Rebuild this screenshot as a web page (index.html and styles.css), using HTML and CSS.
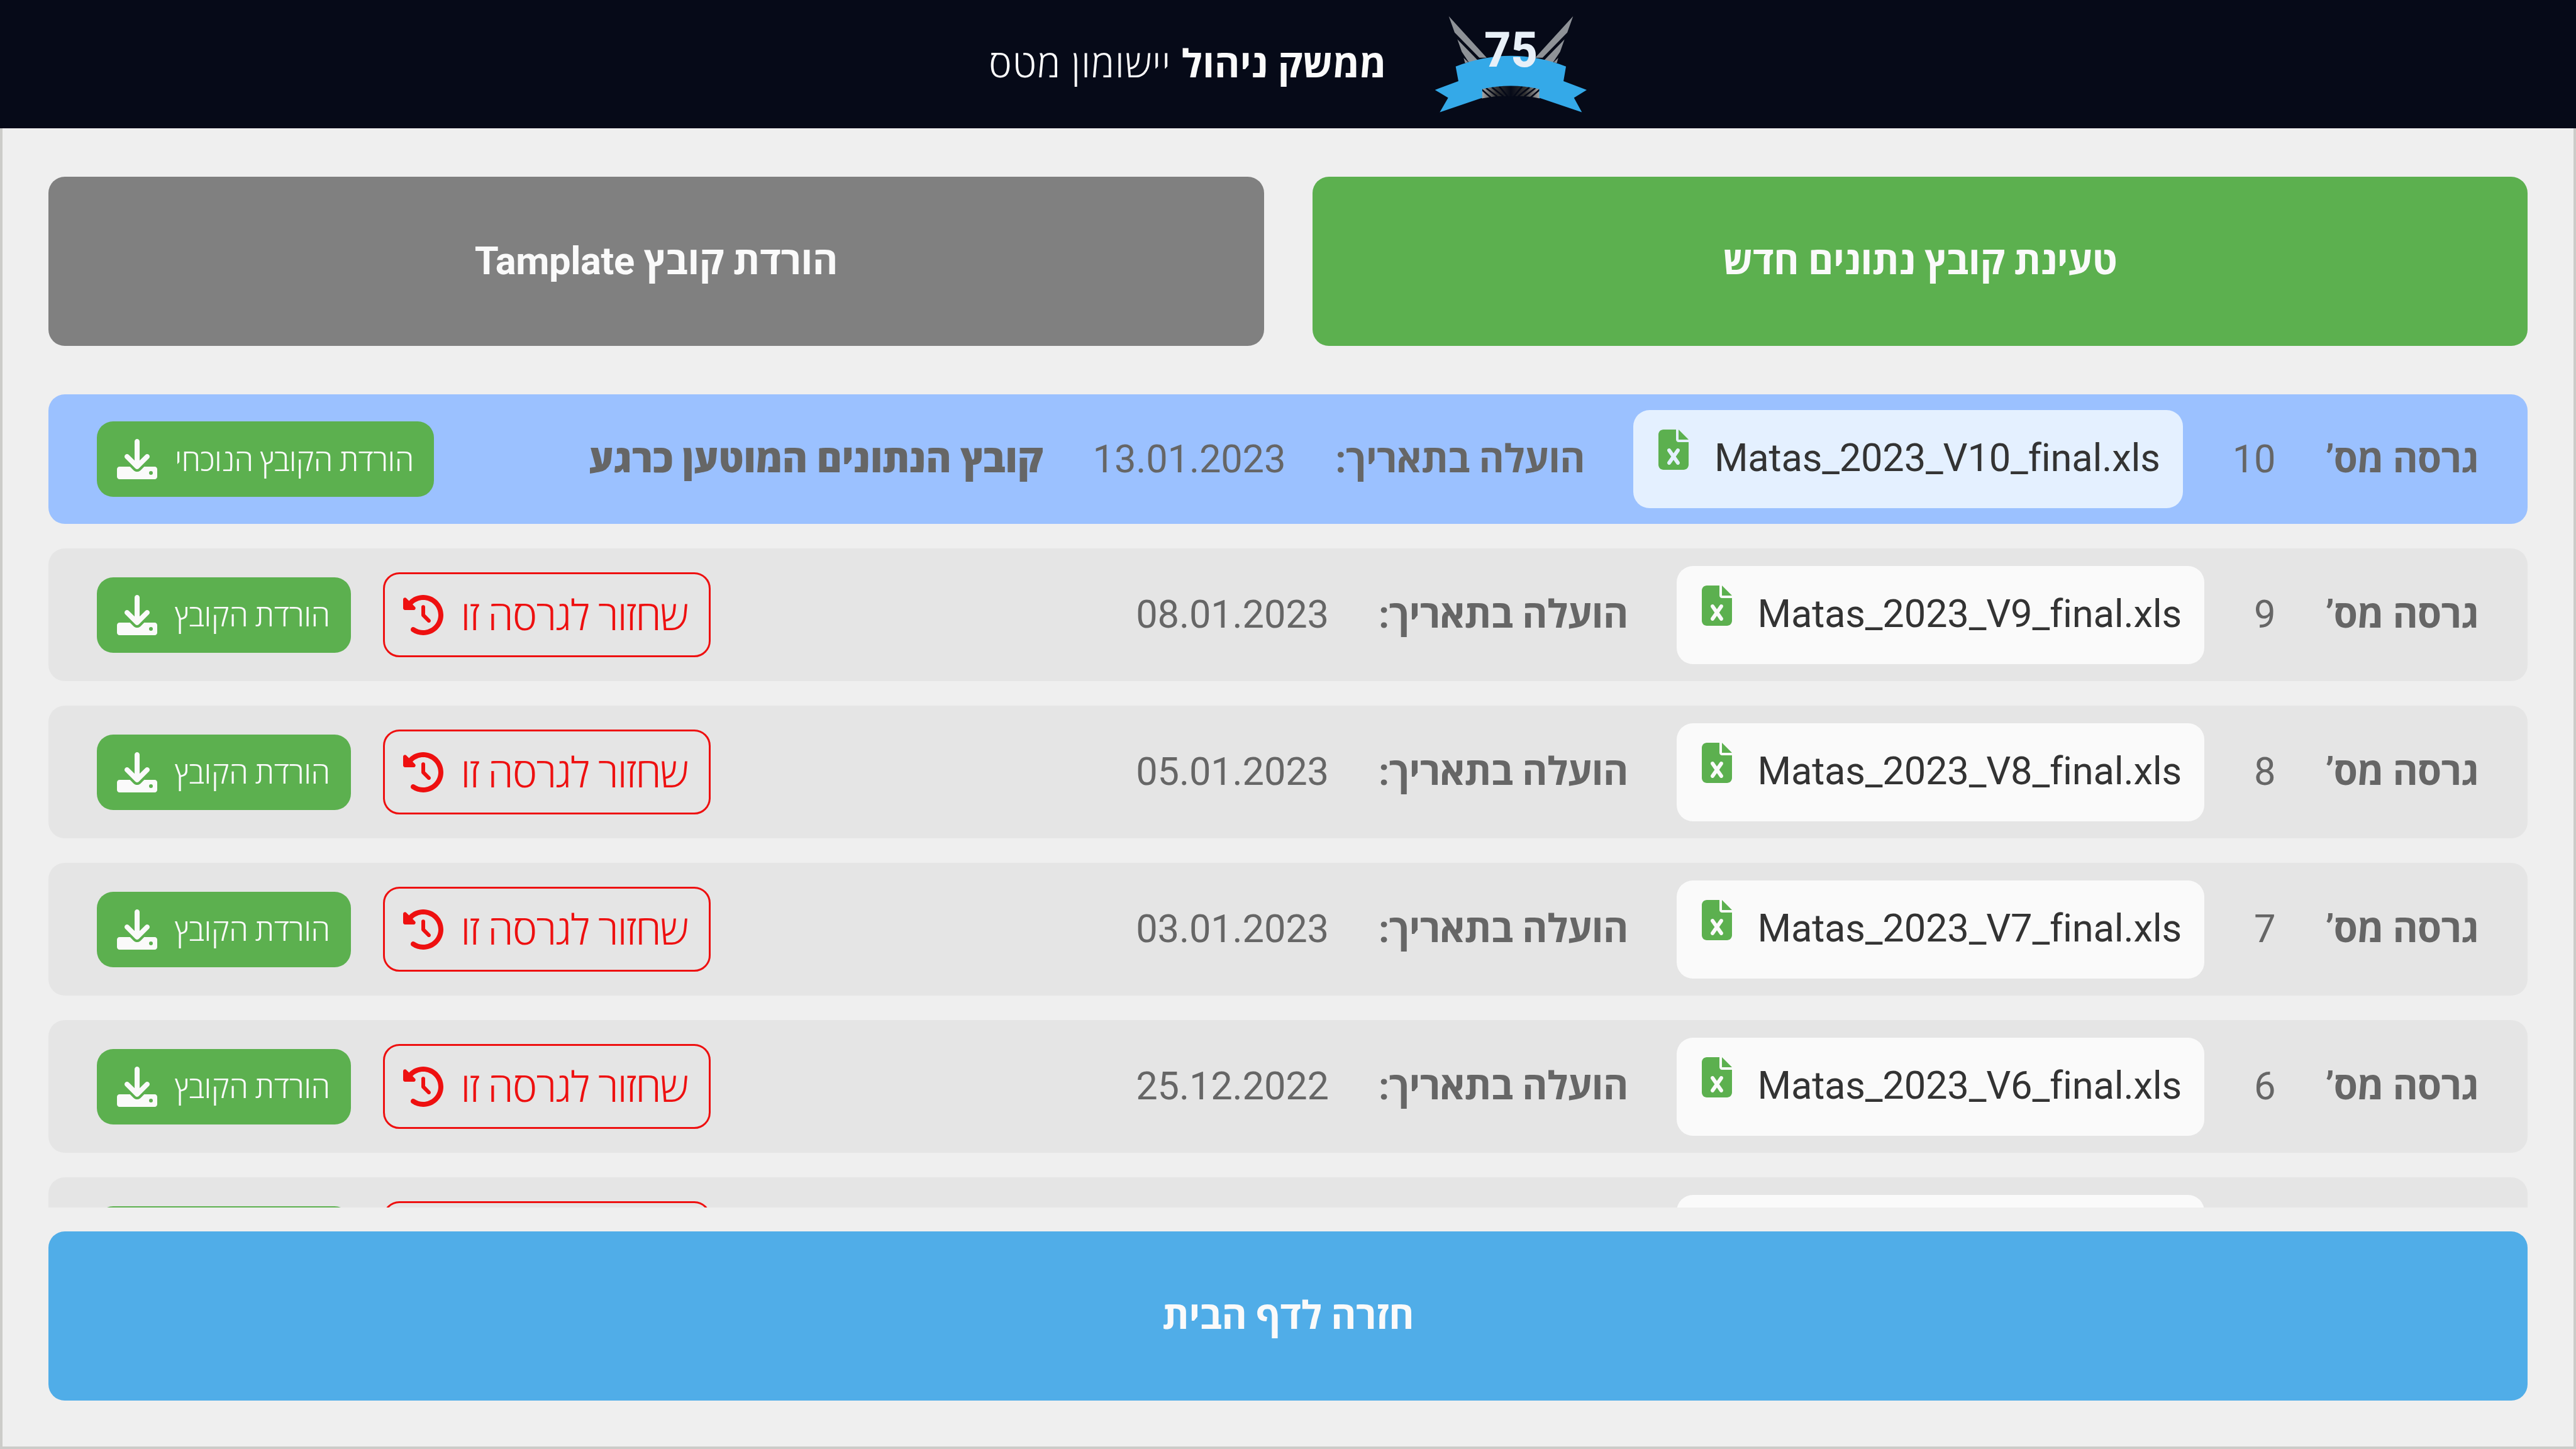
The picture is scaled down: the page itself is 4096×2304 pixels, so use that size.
FILE: index.html
```html
<!DOCTYPE html>
<html lang="he" dir="rtl">
  <head>
    <meta charset="UTF-8" />
    <title>ממשק ניהול יישומון מטס</title>
    <link rel="stylesheet" href="styles.css">
  </head>
  <body>
    <!-- Icons -->
    <svg class="sprite">
      <symbol id="icon-excel" viewBox="0 0 384 512">
        <path d="M64 0C28.7 0 0 28.7 0 64V448c0 35.3 28.7 64 64 64H320c35.3 0 64-28.7 64-64V160H256c-17.7 0-32-14.3-32-32V0H64zM256 0V128H384L256 0zM155.7 250.2L192 302.1l36.3-51.9c7.6-10.9 22.6-13.5 33.4-5.9s13.5 22.6 5.9 33.4L221.3 344l46.4 66.2c7.6 10.9 5 25.8-5.9 33.4s-25.8 5-33.4-5.9L192 385.8l-36.3 51.9c-7.6 10.9-22.6 13.5-33.4 5.9s-13.5-22.6-5.9-33.4L162.7 344l-46.4-66.2c-7.6-10.9-5-25.8 5.9-33.4s25.8-5 33.4 5.9z" />
      </symbol>
      <symbol id="icon-restore" viewBox="0 0 512 512">
        <path d="M75 75L41 41C25.9 25.9 0 36.6 0 57.9V168c0 13.3 10.7 24 24 24H134.1c21.4 0 32.1-25.9 17-41l-30.8-30.8C155 85.5 203 64 256 64c106 0 192 86 192 192s-86 192-192 192c-40.8 0-78.6-12.7-109.7-34.4c-14.5-10.1-34.4-6.6-44.6 7.9s-6.6 34.4 7.9 44.6C151.2 495 201.7 512 256 512c141.4 0 256-114.6 256-256S397.4 0 256 0C185.3 0 121.3 28.7 75 75zm181 53c-13.3 0-24 10.7-24 24V256c0 6.4 2.5 12.5 7 17l72 72c9.4 9.4 24.6 9.4 33.9 0s9.4-24.6 0-33.9l-65-65V152c0-13.3-10.7-24-24-24z" />
      </symbol>
      <symbol id="icon-download" viewBox="0 0 512 512">
        <path d="M288 32c0-17.7-14.3-32-32-32s-32 14.3-32 32V274.7l-73.4-73.4c-12.5-12.5-32.8-12.5-45.3 0s-12.5 32.8 0 45.3l128 128c12.5 12.5 32.8 12.5 45.3 0l128-128c12.5-12.5 12.5-32.8 0-45.3s-32.8-12.5-45.3 0L288 274.7V32zM32 352c-17.7 0-32 14.3-32 32v96c0 17.7 14.3 32 32 32H480c17.7 0 32-14.3 32-32V384c0-17.7-14.3-32-32-32H346.5l-45.3 45.3c-25 25-65.5 25-90.5 0L165.5 352H32zm400 56a24 24 0 1 1 0 48 24 24 0 1 1 0-48z" />
      </symbol>
    </svg>

    <!-- Header -->
    <header class="header">
      <svg class="logo" viewBox="126 75 730 465">
        <defs>
          <linearGradient id="rays" x1="0" x2="1" y1="0" y2="0">
            <stop offset="0" stop-color="#a9a9a9" />
            <stop offset="0.25" stop-color="#333" />
            <stop offset="0.5" stop-color="#060a18" />
            <stop offset="0.75" stop-color="#333" />
            <stop offset="1" stop-color="#a9a9a9" />
          </linearGradient>
        </defs>
        <g fill="#8e9297">
          <path d="M194 77L375 275L340 275L222 155ZM235 187L335 290L290 298L256 247ZM265 276L288 298L272 301Z" />
          <path d="M788 77L607 275L642 275L760 155ZM747 187L647 290L692 298L726 247ZM717 276L694 298L710 301Z" />
        </g>
        <path fill="url(#rays)" d="M352 425Q490 385 628 425V470L590 462L552 459L490 459L420 459L352 470Z" />
        <path stroke="#060a18" stroke-width="8" d="M352 428L395 465M372 420L425 460M400 416L455 460M435 412L475 460M628 428L585 465M608 420L555 460M580 416L525 460M545 412L505 460" />
        <path fill="#34a9e8" d="M227 317Q490 215 754 317L742 387L853 429L792 467L830 536L626 467V425Q490 395 354 425V467L151 536L191 467L128 429L240 387Z" />
        <text class="logo-text" x="363" y="318" textLength="256" lengthAdjust="spacingAndGlyphs">75</text>
      </svg>
      <h1 class="title"><b>ממשק ניהול</b> <span>יישומון מטס</span></h1>
    </header>

    <!-- Main Content -->
    <main class="main">
      <div class="actions">
        <button class="big-btn green">טעינת קובץ נתונים חדש</button>
        <button class="big-btn gray">הורדת קובץ Tamplate</button>
      </div>

      <!-- Versions List, rows are added by the script -->
      <div class="versions" id="versions"></div>

      <button class="big-btn blue">חזרה לדף הבית</button>
    </main>

    <script>
      const versions = [
        { number: 10, date: "13.01.2023", current: true },
        { number: 9, date: "08.01.2023" },
        { number: 8, date: "05.01.2023" },
        { number: 7, date: "03.01.2023" },
        { number: 6, date: "25.12.2022" },
        { number: 5, date: "20.12.2022" },
      ];

      function icon(name) {
        return `<svg class="icon ${name}"><use href="#icon-${name}"></use></svg>`;
      }

      function populateVersions() {
        const list = document.getElementById("versions");

        versions.forEach((version) => {
          const row = document.createElement("div");
          row.className = version.current ? "version current" : "version";

          row.innerHTML = `
      <b class="label">גרסה מס’</b>
      <span class="number">${version.number}</span>
      <div class="file"><span class="file-name">Matas_2023_V${version.number}_final.xls</span>${icon("excel")}</div>
      <b class="label">הועלה בתאריך:</b>
      <span class="date">${version.date}</span>
      ${version.current ? '<b class="status">קובץ הנתונים המוטען כרגע</b>' : ""}
      <div class="buttons">
        ${version.current ? "" : `<button class="restore-btn"><span>שחזור לגרסה זו</span>${icon("restore")}</button>`}
        <button class="download-btn"><span>${version.current ? "הורדת הקובץ הנוכחי" : "הורדת הקובץ"}</span>${icon("download")}</button>
      </div>
    `;

          list.appendChild(row);
        });
      }

      populateVersions();
    </script>
  </body>
</html>
```

FILE: styles.css
```css
/* Global Reset */
* {
  margin: 0;
  padding: 0;
  box-sizing: border-box;
}

body {
  font-family: Roboto, "Open Sans", sans-serif;
  font-size: 1.5vw;
  line-height: 75px;
  background-color: #efefef;
  color: #666;
  display: flex;
  flex-direction: column;
  height: 100vh;
  overflow: hidden;
}

button {
  font: inherit;
  border: none;
  cursor: pointer;
}

.sprite {
  display: none;
}

.icon {
  width: 64px;
  height: 64px;
  flex: none;
  fill: currentColor;
}

/* Header */
.header {
  height: 204px;
  flex: none;
  background-color: #060a18;
  color: #fafafa;
  display: flex;
  justify-content: center;
  align-items: center;
  gap: 76px;
}

.logo {
  width: 243px;
  height: 155px;
}

.logo-text {
  font-size: 236px;
  font-weight: 800;
  fill: #e8f0f8;
  direction: ltr;
}

.title {
  font-size: 1.5vw;
  font-weight: 300;
  letter-spacing: 1.2px;
  white-space: nowrap;
}

.title b {
  font-weight: 700;
  letter-spacing: 0.2px;
}

/* Main Content */
.main {
  flex: 1;
  min-height: 0;
  display: flex;
  flex-direction: column;
  padding: 77px 73px 73px;
  border: 4px solid #ccccc9;
  border-top: none;
}

.actions {
  display: flex;
  gap: 77px;
  margin-bottom: 77px;
}

.big-btn {
  flex: 1;
  height: 269px;
  border-radius: 26px;
  color: #fafafa;
  font-weight: 700;
  letter-spacing: -0.4px;
}

.green {
  background-color: #5cb04f;
}

.gray {
  background-color: #808080;
}

.blue {
  flex: none;
  background-color: #50ade8;
  letter-spacing: -0.6px;
}

/* Versions List */
.versions {
  flex: 1;
  min-height: 0;
  overflow: hidden;
  display: flex;
  flex-direction: column;
  gap: 39px;
  margin-bottom: 38px;
}

.version {
  height: 211px;
  flex: none;
  display: flex;
  align-items: center;
  gap: 79px;
  padding: 0 78px 0 77px;
  border-radius: 26px;
  background-color: #e5e5e5;
  white-space: nowrap;
}

.version.current {
  height: 206px;
  background-color: #9bc1ff;
}

.label {
  letter-spacing: -0.7px;
}

.number,
.date,
.file-name {
  letter-spacing: -0.2px;
}

.status {
  font-weight: 800;
  letter-spacing: -0.5px;
}

.file {
  height: 156px;
  display: flex;
  gap: 41px;
  padding: 31px 36px 0 40px;
  margin-left: -2px;
  border-radius: 26px;
  background-color: #fafafa;
  color: #333;
}

.current .file {
  background-color: #e4f0ff;
}

.file-name {
  direction: ltr;
  padding-top: 8px;
}

.excel {
  width: 48px;
  color: #5cb04f;
}

/* Row Buttons */
.buttons {
  display: flex;
  align-items: center;
  gap: 51px;
  margin-right: auto;
}

.download-btn,
.restore-btn {
  display: flex;
  align-items: center;
  gap: 28px;
  border-radius: 26px;
  font-weight: 300;
}

.download-btn span,
.restore-btn span {
  padding-top: 4px;
}

.download-btn {
  height: 120px;
  padding: 0 33px 0 32px;
  font-size: 1.2vw;
  letter-spacing: -0.4px;
  background-color: #5cb04f;
  color: #fafafa;
}

.current .download-btn {
  letter-spacing: -0.65px;
}

.restore-btn {
  height: 135px;
  padding: 0 34px 0 29px;
  font-size: 66px;
  font-weight: 350;
  letter-spacing: -1.6px;
  background: none;
  border: 3px solid #ee1010;
  color: #ee1010;
}
```
